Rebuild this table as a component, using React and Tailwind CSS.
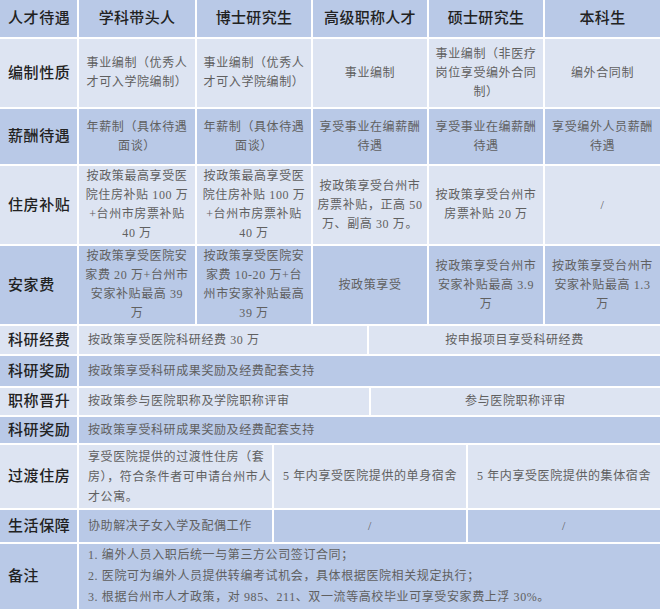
import React from "react";

const MED = "bg-[#b9c9e7]";
const LIGHT = "bg-[#dde4f2]";

const bodyFont = { fontFamily: '"Liberation Serif", "Noto Sans CJK SC", serif' };
const labelFont = { fontFamily: '"Liberation Serif", "Noto Sans CJK SC", serif' };

function Lines({ lines }) {
  return (
    <>
      {lines.map((l, i) => (
        <div key={i} className="whitespace-nowrap">
          {l}
        </div>
      ))}
    </>
  );
}

function Label({ children, bg }) {
  return (
    <div
      style={labelFont}
      className={`${bg} w-[77px] shrink-0 flex items-center pl-[8px] text-[15px] font-medium tracking-[0.6px] text-[#222]`}
    >
      {children}
    </div>
  );
}

function Cell({ lines, bg, w, align = "center", lead = "leading-[19px]" }) {
  const al = align === "center" ? "text-center items-center" : "text-left items-start pl-[9px]";
  return (
    <div
      style={bodyFont}
      className={`${bg} ${w} flex flex-col justify-center ${al} text-[12px] tracking-[0.6px] text-[#606060] ${lead}`}
    >
      <div className={align === "center" ? "flex flex-col items-center" : "flex flex-col items-start"}>
        <Lines lines={lines} />
      </div>
    </div>
  );
}

const W = ["w-[116px] shrink-0", "w-[114px] shrink-0", "w-[114px] shrink-0", "w-[114px] shrink-0", "flex-1"];

function FiveRow({ label, h, bg, cells }) {
  return (
    <div className={`flex gap-[2px] ${h}`}>
      <Label bg={bg}>{label}</Label>
      {cells.map((c, i) => (
        <Cell key={i} lines={c} bg={bg} w={W[i]} />
      ))}
    </div>
  );
}

export default function App() {
  const headers = ["学科带头人", "博士研究生", "高级职称人才", "硕士研究生", "本科生"];
  return (
    <div className="w-[660px] h-[609px] bg-white flex flex-col gap-[2px] overflow-hidden">
      {/* header */}
      <div className="flex gap-[2px] h-[37px]">
        <Label bg={MED}>人才待遇</Label>
        {headers.map((h, i) => (
          <div
            key={i}
            style={labelFont}
            className={`${MED} ${W[i]} flex items-center justify-center text-[15px] font-medium tracking-[0.3px] text-[#222]`}
          >
            {h}
          </div>
        ))}
      </div>

      <FiveRow
        label="编制性质"
        h="h-[68px]"
        bg={LIGHT}
        cells={[
          ["事业编制（优秀人", "才可入学院编制）"],
          ["事业编制（优秀人", "才可入学院编制）"],
          ["事业编制"],
          ["事业编制（非医疗", "岗位享受编外合同", "制）"],
          ["编外合同制"],
        ]}
      />

      <FiveRow
        label="薪酬待遇"
        h="h-[55px]"
        bg={MED}
        cells={[
          ["年薪制（具体待遇", "面谈）"],
          ["年薪制（具体待遇", "面谈）"],
          ["享受事业在编薪酬", "待遇"],
          ["享受事业在编薪酬", "待遇"],
          ["享受编外人员薪酬", "待遇"],
        ]}
      />

      <FiveRow
        label="住房补贴"
        h="h-[78px]"
        bg={LIGHT}
        cells={[
          ["按政策最高享受医", "院住房补贴 100 万", "+台州市房票补贴", "40 万"],
          ["按政策最高享受医", "院住房补贴 100 万", "+台州市房票补贴", "40 万"],
          ["按政策享受台州市", "房票补贴，正高 50", "万、副高 30 万。"],
          ["按政策享受台州市", "房票补贴 20 万"],
          ["/"],
        ]}
      />

      <FiveRow
        label="安家费"
        h="h-[78px]"
        bg={MED}
        cells={[
          ["按政策享受医院安", "家费 20 万+台州市", "安家补贴最高 39", "万"],
          ["按政策享受医院安", "家费 10-20 万+台", "州市安家补贴最高", "39 万"],
          ["按政策享受"],
          ["按政策享受台州市", "安家补贴最高 3.9", "万"],
          ["按政策享受台州市", "安家补贴最高 1.3", "万"],
        ]}
      />

      {/* 科研经费 */}
      <div className="flex gap-[2px] h-[28px]">
        <Label bg={LIGHT}>科研经费</Label>
        <Cell bg={LIGHT} w="w-[288px] shrink-0" align="left" lines={["按政策享受医院科研经费 30 万"]} />
        <Cell bg={LIGHT} w="flex-1" lines={["按申报项目享受科研经费"]} />
      </div>

      {/* 科研奖励 */}
      <div className="flex gap-[2px] h-[30px]">
        <Label bg={MED}>科研奖励</Label>
        <Cell bg={MED} w="flex-1" align="left" lines={["按政策享受科研成果奖励及经费配套支持"]} />
      </div>

      {/* 职称晋升 */}
      <div className="flex gap-[2px] h-[27px]">
        <Label bg={LIGHT}>职称晋升</Label>
        <Cell bg={LIGHT} w="w-[290px] shrink-0" align="left" lines={["按政策参与医院职称及学院职称评审"]} />
        <Cell bg={LIGHT} w="flex-1" lines={["参与医院职称评审"]} />
      </div>

      {/* 科研奖励 */}
      <div className="flex gap-[2px] h-[26px]">
        <Label bg={MED}>科研奖励</Label>
        <Cell bg={MED} w="flex-1" align="left" lines={["按政策享受科研成果奖励及经费配套支持"]} />
      </div>

      {/* 过渡住房 */}
      <div className="flex gap-[2px] h-[63px]">
        <Label bg={LIGHT}>过渡住房</Label>
        <Cell
          bg={LIGHT}
          w="w-[193px] shrink-0"
          align="left"
          lead="leading-[20px]"
          lines={["享受医院提供的过渡性住房（套", "房），符合条件者可申请台州市人", "才公寓。"]}
        />
        <Cell bg={LIGHT} w="w-[192px] shrink-0" lines={["5 年内享受医院提供的单身宿舍"]} />
        <Cell bg={LIGHT} w="flex-1" lines={["5 年内享受医院提供的集体宿舍"]} />
      </div>

      {/* 生活保障 */}
      <div className="flex gap-[2px] h-[32px]">
        <Label bg={MED}>生活保障</Label>
        <Cell bg={MED} w="w-[193px] shrink-0" align="left" lines={["协助解决子女入学及配偶工作"]} />
        <Cell bg={MED} w="w-[192px] shrink-0" lines={["/"]} />
        <Cell bg={MED} w="flex-1" lines={["/"]} />
      </div>

      {/* 备注 */}
      <div className="flex gap-[2px] flex-1">
        <Label bg={MED}>备注</Label>
        <Cell
          bg={MED}
          w="flex-1"
          align="left"
          lead="leading-[21px]"
          lines={[
            "1. 编外人员入职后统一与第三方公司签订合同；",
            "2. 医院可为编外人员提供转编考试机会，具体根据医院相关规定执行；",
            "3. 根据台州市人才政策，对 985、211、双一流等高校毕业可享受安家费上浮 30%。",
          ]}
        />
      </div>
    </div>
  );
}
